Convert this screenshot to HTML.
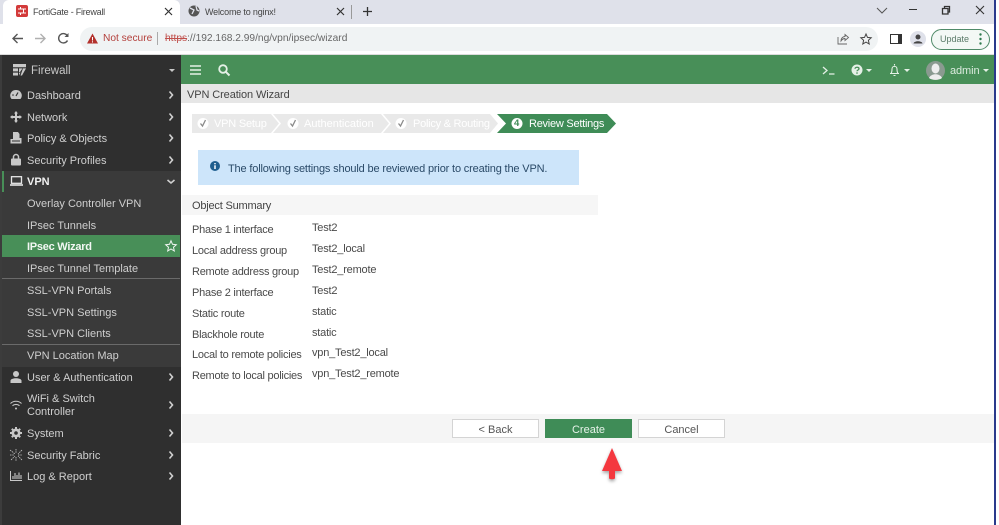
<!DOCTYPE html>
<html><head><meta charset="utf-8"><style>
html,body{margin:0;padding:0}
body{width:999px;height:525px;position:relative;overflow:hidden;background:#fff;font-family:"Liberation Sans",sans-serif;font-size:11px;color:#444}
.a,.t{position:absolute}
.t{white-space:nowrap;line-height:14px;height:14px}
.s{color:#cfcfcf;left:27px}
.k{left:192px;color:#4a4a4a;letter-spacing:-.25px}
.v{left:312px;color:#4a4a4a;letter-spacing:-.2px}
svg{position:absolute;overflow:visible}
</style></head><body>

<div class="a" style="left:0;top:0;width:994px;height:24px;background:#dfe1ea"></div>
<div class="a" style="left:3px;top:0;width:177px;height:24px;background:#fff;border-radius:6px 6px 0 0"></div>
<div class="a" style="left:16px;top:5px;width:12px;height:12px;background:#d33a3a;border-radius:2px"></div>
<svg style="left:16px;top:5px" width="12" height="12"><path d="M2 4H10M2 8H10M4.500 2V4M7.500 4V8M4.500 8V10" stroke="#fff" stroke-width="1" fill="none"/></svg>
<span class="t" style="left:33px;top:5px;font-size:9px;letter-spacing:-.23px;color:#444">FortiGate - Firewall</span>
<svg style="left:164px;top:7px" width="9" height="9"><path d="M1 1L8 8M8 1L1 8" stroke="#333" stroke-width="1.200"/></svg>
<svg style="left:188px;top:5px" width="12" height="12"><circle cx="6" cy="6" r="5.500" fill="#555"/><path d="M2 3L6 5L4 9M8 1L9 5L11 6" stroke="#dfe1ea" stroke-width="1.300" fill="none"/></svg>
<span class="t" style="left:205px;top:5px;font-size:9px;letter-spacing:-.18px;color:#444">Welcome to nginx!</span>
<svg style="left:336px;top:7px" width="9" height="9"><path d="M1 1L8 8M8 1L1 8" stroke="#333" stroke-width="1.200"/></svg>
<div class="a" style="left:351px;top:5px;width:1px;height:14px;background:#999"></div>
<svg style="left:362px;top:6px" width="11" height="11"><path d="M5.500 1V10M1 5.500H10" stroke="#333" stroke-width="1.300"/></svg>

<svg style="left:876px;top:6px" width="12" height="8"><path d="M1 2L6 7L11 2" stroke="#555" fill="none"/></svg>
<div class="a" style="left:909px;top:9px;width:8px;height:1px;background:#333"></div>
<svg style="left:941px;top:5px" width="10" height="10"><path d="M1.500 3.500H7V9H1.500ZM3.500 3V1.500H8.500V7H7.500" stroke="#333" stroke-width="1.300" fill="none"/></svg>
<svg style="left:975px;top:5px" width="10" height="10"><path d="M1 1L9 9M9 1L1 9" stroke="#333" stroke-width="1.100"/></svg>

<svg style="left:11px;top:32px" width="13" height="13"><path d="M12 6.500H2M6.500 2L2 6.500L6.500 11" stroke="#555" stroke-width="1.400" fill="none"/></svg>
<svg style="left:34px;top:32px" width="13" height="13"><path d="M1 6.500H11M6.500 2L11 6.500L6.500 11" stroke="#b0b0b0" stroke-width="1.400" fill="none"/></svg>
<svg style="left:57px;top:32px" width="13" height="13"><path d="M10.500 8.500A4.700 4.700 0 1 1 10.500 4" stroke="#555" stroke-width="1.400" fill="none"/><path d="M11.500 1V5H7.500Z" fill="#555"/></svg>
<div class="a" style="left:80px;top:27px;width:798px;height:24px;background:#f0f3f4;border-radius:12px"></div>
<svg style="left:87px;top:33px" width="11" height="11"><path d="M5.500 .5L11 10.500H0Z" fill="#b3312c"/><path d="M5.500 4V7.500M5.500 8.300V9.500" stroke="#fff"/></svg>
<span class="t" style="left:103px;top:32px;font-size:10.200px;color:#b3403c">Not secure</span>
<div class="a" style="left:157px;top:32px;width:1px;height:13px;background:#aaa"></div>
<span class="t" style="left:165px;top:32px;font-size:10.200px;color:#666"><span style="color:#c0504c;text-decoration:line-through">https</span>://192.168.2.99/ng/vpn/ipsec/wizard</span>
<svg style="left:837px;top:33px" width="12" height="12"><path d="M1 4V11H10M4 8C4 5 6 3.500 8 3.500V1.500L11.500 4.500L8 7.500V5.500C6.500 5.500 5 6.500 4 8Z" stroke="#666" stroke-width=".9" fill="none"/></svg>
<svg style="left:860px;top:33px" width="12" height="12"><path d="M6 1L7.500 4.400L11.200 4.800L8.400 7.300L9.200 11L6 9.100L2.800 11L3.600 7.300L.8 4.800L4.500 4.400Z" stroke="#444" stroke-width="1" fill="none"/></svg>
<div class="a" style="left:890px;top:34px;width:7px;height:8px;border:1.500px solid #333;border-right-width:4px;box-sizing:content-box"></div>
<div class="a" style="left:910px;top:31px;width:16px;height:16px;background:#dfe1ea;border-radius:50%"></div>
<svg style="left:913px;top:34px" width="10" height="10"><circle cx="5" cy="3" r="2.500" fill="#444"/><path d="M.5 9.500C1 6.500 9 6.500 9.500 9.500Z" fill="#444"/></svg>
<div class="a" style="left:931px;top:29px;width:57px;height:19px;border:1px solid #4f8a68;border-radius:11px;background:#f3f8f5"></div>
<span class="t" style="left:940px;top:32px;font-size:9px;color:#5a7a68">Update</span>
<svg style="left:979px;top:33px" width="3" height="12"><circle cx="1.500" cy="1.500" r="1.200" fill="#2f7a4f"/><circle cx="1.500" cy="6" r="1.200" fill="#2f7a4f"/><circle cx="1.500" cy="10.500" r="1.200" fill="#2f7a4f"/></svg>

<div class="a" style="left:0;top:54px;width:994px;height:1px;background:#dcdcdc"></div>
<div class="a" style="left:994px;top:0;width:2px;height:525px;background:#2a3a8c"></div>
<div class="a" style="left:996px;top:0;width:3px;height:525px;background:#fff"></div>

<div class="a" style="left:181px;top:55px;width:813px;height:29px;background:#488f58"></div>
<svg style="left:190px;top:65px" width="11" height="10"><path d="M0 1H11M0 5H11M0 9H11" stroke="#e4f0e6" stroke-width="1.600"/></svg>
<svg style="left:218px;top:64px" width="12" height="12"><circle cx="5" cy="5" r="3.800" stroke="#e4f0e6" stroke-width="1.800" fill="none"/><path d="M7.800 7.800L11.500 11.500" stroke="#e4f0e6" stroke-width="2"/></svg>
<svg style="left:822px;top:66px" width="13" height="9"><path d="M1 1L5 4.500L1 8M7 8H12.500" stroke="#e4f0e6" stroke-width="1.300" fill="none"/></svg>
<svg style="left:851px;top:64px" width="12" height="12"><circle cx="6" cy="6" r="5.500" fill="#e4f0e6"/><path d="M4 4.700C4 2.800 8 2.800 8 4.700C8 6 6 6 6 7.300" stroke="#488f58" stroke-width="1.300" fill="none"/><path d="M6 8.300V9.800" stroke="#488f58" stroke-width="1.300"/></svg>
<svg style="left:866px;top:69px" width="6" height="3"><path d="M0 0H6L3 3Z" fill="#e4f0e6"/></svg>
<svg style="left:889px;top:64px" width="11" height="13"><path d="M1 9.500H10M2 9.500C3 8 3 6 3 5C3 1.500 8 1.500 8 5C8 6 8 8 9 9.500M5.500 0V1.500M4.500 11.500H6.500" stroke="#e4f0e6" stroke-width="1.100" fill="none"/></svg>
<svg style="left:904px;top:69px" width="6" height="3"><path d="M0 0H6L3 3Z" fill="#e4f0e6"/></svg>
<div class="a" style="left:926px;top:61px;width:19px;height:19px;border-radius:50%;background:#8a9a90;overflow:hidden"></div>
<svg style="left:926px;top:61px" width="19" height="19"><ellipse cx="9.500" cy="7.500" rx="4" ry="5" fill="#eee"/><path d="M3 17C5 12 14 12 16 17C13 19.500 6 19.500 3 17Z" fill="#eee"/></svg>
<span class="t" style="left:950px;top:64px;font-size:11px;letter-spacing:-.1px;color:#dcebdf">admin</span>
<svg style="left:983px;top:69px" width="6" height="3"><path d="M0 0H6L3 3Z" fill="#e4f0e6"/></svg>

<div class="a" style="left:0;top:55px;width:181px;height:470px;background:#2f2f2f"></div>
<div class="a" style="left:0;top:171px;width:181px;height:196px;background:#3a3a3a"></div>
<div class="a" style="left:2px;top:171px;width:2px;height:21px;background:#488f58"></div>
<div class="a" style="left:2px;top:235px;width:178px;height:22px;background:#488f58"></div>
<div class="a" style="left:2px;top:278px;width:178px;height:1px;background:#6a6a6a"></div>
<div class="a" style="left:2px;top:344px;width:178px;height:1px;background:#6a6a6a"></div>
<div class="a" style="left:0;top:55px;width:2px;height:470px;background:#3c3c3c"></div>

<svg style="left:13px;top:64px" width="14" height="12"><path d="M0 0H13V3.200H0ZM0 4.400H5V7.400H0ZM6 4.400H9.500L7 8H6ZM0 8.600H5V11.500H0ZM6 8.600H7.500L6 11.500ZM10 4.400H13L9 11.500H7.500Z" fill="#c8c8c8"/></svg>
<span class="t" style="left:31px;top:64px;color:#c8c8c8;font-size:11.500px">Firewall</span>
<svg style="left:169px;top:69px" width="6" height="3"><path d="M0 0H6L3 3Z" fill="#c8c8c8"/></svg>

<svg style="left:10px;top:89px" width="12" height="11"><path d="M6 1A5.500 5.500 0 0 0 1.500 10H10.500A5.500 5.500 0 0 0 6 1Z" fill="#c8c8c8"/><path d="M6 7L8 3.500" stroke="#2f2f2f" stroke-width="1.200"/><circle cx="3" cy="6" r=".8" fill="#2f2f2f"/></svg>
<span class="t s" style="top:89px">Dashboard</span>
<svg style="left:10px;top:111px" width="12" height="12"><path d="M6 0L8 2.500H7V5H9.500V4L12 6L9.500 8V7H7V9.500H8L6 12L4 9.500H5V7H2.500V8L0 6L2.500 4V5H5V2.500H4Z" fill="#c8c8c8"/></svg>
<span class="t s" style="top:111px">Network</span>
<svg style="left:10px;top:132px" width="12" height="12"><path d="M3 0H8L9.500 2V6H11.500V11.500H.5V7H3Z" fill="#c8c8c8"/><path d="M2 9H10" stroke="#2f2f2f"/></svg>
<span class="t s" style="top:132px">Policy &amp; Objects</span>
<svg style="left:11px;top:153px" width="10" height="13"><path d="M2.500 6V4A2.500 2.500 0 0 1 7.500 4V6" stroke="#c8c8c8" stroke-width="1.500" fill="none"/><rect y="5.500" width="10" height="7" rx="1" fill="#c8c8c8"/></svg>
<span class="t s" style="top:154px">Security Profiles</span>
<svg style="left:10px;top:176px" width="13" height="10"><rect x="1.500" y=".7" width="10" height="6.600" fill="none" stroke="#e6e6e6" stroke-width="1.300"/><path d="M0 9H13" stroke="#e6e6e6" stroke-width="1.600"/></svg>
<span class="t" style="left:27px;top:175px;color:#f0f0f0;font-weight:bold">VPN</span>

<span class="t s" style="top:197px">Overlay Controller VPN</span>
<span class="t s" style="top:219px">IPsec Tunnels</span>
<span class="t" style="left:27px;top:240px;color:#f2f7f3;font-weight:bold;letter-spacing:-.25px">IPsec Wizard</span>
<svg style="left:165px;top:240px" width="12" height="12"><path d="M6 .8L7.500 4.300L11.300 4.700L8.500 7.200L9.300 11L6 9L2.700 11L3.500 7.200L.7 4.700L4.500 4.300Z" stroke="#f0f5f1" stroke-width="1" fill="none"/></svg>
<span class="t s" style="top:262px">IPsec Tunnel Template</span>
<span class="t s" style="top:284px">SSL-VPN Portals</span>
<span class="t s" style="top:306px">SSL-VPN Settings</span>
<span class="t s" style="top:327px">SSL-VPN Clients</span>
<span class="t s" style="top:349px">VPN Location Map</span>

<svg style="left:10px;top:371px" width="12" height="12"><circle cx="6" cy="3" r="3" fill="#c8c8c8"/><path d="M.5 12V9.500C1 6.500 11 6.500 11.500 9.500V12Z" fill="#c8c8c8"/></svg>
<span class="t s" style="top:371px">User &amp; Authentication</span>
<svg style="left:10px;top:400px" width="12" height="10"><path d="M.5 3.500C3.500 .5 8.500 .5 11.500 3.500M2.500 5.700C4.500 4 7.500 4 9.500 5.700" stroke="#c8c8c8" stroke-width="1.100" fill="none"/><circle cx="6" cy="8.500" r="1" fill="#c8c8c8"/></svg>
<span class="t s" style="top:392px">WiFi &amp; Switch</span>
<span class="t s" style="top:405px">Controller</span>
<svg style="left:10px;top:427px" width="12" height="12"><circle cx="6" cy="6" r="4.500" fill="#c8c8c8"/><path d="M6 0V12M0 6H12M1.800 1.800L10.200 10.200M10.200 1.800L1.800 10.200" stroke="#c8c8c8" stroke-width="2"/><circle cx="6" cy="6" r="1.800" fill="#2f2f2f"/></svg>
<span class="t s" style="top:427px">System</span>
<svg style="left:10px;top:449px" width="12" height="12"><path d="M0 1L5 5M12 1L8 5M1 11L5 7M12 11L8 7M6 0V4M6 8V12M0 6H4M8 6H12" stroke="#c8c8c8" stroke-width=".8" stroke-dasharray="1.500 .8"/></svg>
<span class="t s" style="top:449px">Security Fabric</span>
<svg style="left:10px;top:471px" width="12" height="10"><path d="M.5 0V9.500H12" stroke="#c8c8c8" fill="none"/><path d="M3 8V5M5 8V2M7 8V4M9 8V1.500M11 8V4" stroke="#c8c8c8" stroke-width="1.100"/></svg>
<span class="t s" style="top:470px">Log &amp; Report</span>

<svg style="left:0;top:0;position:absolute" width="181" height="525"><g stroke="#d0d0d0" stroke-width="1.600" fill="none"><path d="M169.500 91.500L172.500 95L169.500 98.500M169.500 113.500L172.500 117L169.500 120.500M169.500 134.500L172.500 138L169.500 141.500M169.500 156.500L172.500 160L169.500 163.500M167.500 180L171 183L174.500 180M169.500 373.500L172.500 377L169.500 380.500M169.500 401.500L172.500 405L169.500 408.500M169.500 429.500L172.500 433L169.500 436.500M169.500 451.500L172.500 455L169.500 458.500M169.500 472.500L172.500 476L169.500 479.500"/></g></svg>

<div class="a" style="left:181px;top:84px;width:813px;height:19px;background:#e6e6e6"></div>
<span class="t" style="left:187px;top:88px;font-size:11px;letter-spacing:-.1px;color:#444">VPN Creation Wizard</span>

<svg style="left:192px;top:114px" width="426" height="19">
<path d="M0 0H79L87 9.500L79 19H0Z" fill="#e9e9e9"/>
<path d="M81 0H189L197 9.500L189 19H81L89 9.500Z" fill="#e9e9e9"/>
<path d="M191 0H298L306 9.500L298 19H191L199 9.500Z" fill="#e9e9e9"/>
<path d="M305 0H415L424 9.500L415 19H305L314 9.500Z" fill="#3f8c57"/>
<circle cx="11" cy="9.500" r="5.500" fill="#fff"/><path d="M8.500 9.500L10.500 12L13.500 6" stroke="#8a8a8a" stroke-width="1.300" fill="none"/>
<circle cx="101" cy="9.500" r="5.500" fill="#fff"/><path d="M98.500 9.500L100.500 12L103.500 6" stroke="#8a8a8a" stroke-width="1.300" fill="none"/>
<circle cx="209" cy="9.500" r="5.500" fill="#fff"/><path d="M206.500 9.500L208.500 12L211.500 6" stroke="#8a8a8a" stroke-width="1.300" fill="none"/>
<circle cx="325" cy="9.500" r="5.500" fill="#fff"/>
</svg>
<span class="t" style="left:214px;top:117px;color:#fff;letter-spacing:-.2px">VPN Setup</span>
<span class="t" style="left:304px;top:117px;color:#fff">Authentication</span>
<span class="t" style="left:413px;top:117px;color:#fff;letter-spacing:-.25px">Policy &amp; Routing</span>
<span class="t" style="left:514px;top:117px;color:#3f8c57;font-size:9.500px;font-weight:bold">4</span>
<span class="t" style="left:529px;top:117px;color:#fff;letter-spacing:-.25px">Review Settings</span>

<div class="a" style="left:198px;top:150px;width:381px;height:35px;background:#cde5fa"></div>
<svg style="left:210px;top:161px" width="10" height="10"><circle cx="5" cy="5" r="5" fill="#1f5f8f"/><path d="M5 4.300V8" stroke="#fff" stroke-width="1.500"/><path d="M5 2V3.300" stroke="#fff" stroke-width="1.500"/></svg>
<span class="t" style="left:228px;top:162px;font-size:11px;letter-spacing:-.16px;color:#2a4a68">The following settings should be reviewed prior to creating the VPN.</span>

<div class="a" style="left:182px;top:195px;width:416px;height:20px;background:#f6f6f6"></div>
<span class="t" style="left:192px;top:199px;letter-spacing:-.2px;color:#444">Object Summary</span>

<span class="t k" style="top:223px">Phase 1 interface</span><span class="t v" style="top:221px">Test2</span>
<span class="t k" style="top:244px">Local address group</span><span class="t v" style="top:242px">Test2_local</span>
<span class="t k" style="top:265px">Remote address group</span><span class="t v" style="top:263px">Test2_remote</span>
<span class="t k" style="top:286px">Phase 2 interface</span><span class="t v" style="top:284px">Test2</span>
<span class="t k" style="top:307px">Static route</span><span class="t v" style="top:305px">static</span>
<span class="t k" style="top:328px">Blackhole route</span><span class="t v" style="top:326px">static</span>
<span class="t k" style="top:348px">Local to remote policies</span><span class="t v" style="top:346px">vpn_Test2_local</span>
<span class="t k" style="top:369px">Remote to local policies</span><span class="t v" style="top:367px">vpn_Test2_remote</span>

<div class="a" style="left:182px;top:414px;width:812px;height:29px;background:#f5f5f5"></div>
<div class="a" style="left:452px;top:419px;width:85px;height:17px;background:#fff;border:1px solid #d4d4d4;text-align:center;line-height:20px;color:#555">&lt; Back</div>
<div class="a" style="left:545px;top:419px;width:87px;height:19px;background:#3f8c57;text-align:center;line-height:22px;color:#e6f2e9">Create</div>
<div class="a" style="left:638px;top:419px;width:85px;height:17px;background:#fff;border:1px solid #d4d4d4;text-align:center;line-height:20px;color:#555">Cancel</div>

<svg style="left:600px;top:447px;filter:drop-shadow(0 2px 1.500px rgba(0,0,0,.35))" width="24" height="36">
<path d="M12 1L22 24H15V31.500Q12 33 9 31.500V24H2Z" fill="#f4383f"/>
</svg>

</body></html>
